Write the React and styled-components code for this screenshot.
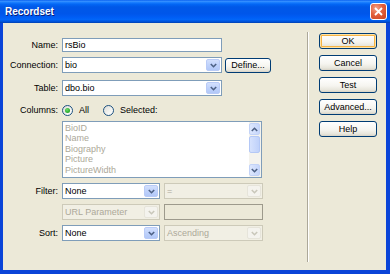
import React from "react";
import styled, { createGlobalStyle } from "styled-components";

const GlobalStyle = createGlobalStyle`
  html, body {
    margin: 0;
    padding: 0;
    background: #ece9d8;
  }
  * {
    box-sizing: border-box;
  }
`;

const Window = styled.div`
  width: 390px;
  height: 274px;
  display: flex;
  flex-direction: column;
  font-family: "Liberation Sans", Arial, sans-serif;
  font-size: 9px;
  color: #000;
  overflow: hidden;
`;

const TitleBar = styled.div`
  height: 23px;
  flex-shrink: 0;
  display: flex;
  align-items: center;
  justify-content: space-between;
  padding: 0 3px 0 5px;
  background: linear-gradient(
    to bottom,
    #0058ee 0%,
    #3a93ff 5%,
    #1c80ff 10%,
    #0367f5 18%,
    #0058e8 30%,
    #0056ea 60%,
    #005df5 75%,
    #0165f8 85%,
    #0052d8 94%,
    #0040b0 100%
  );
`;

const Title = styled.span`
  color: #fff;
  font-weight: bold;
  font-size: 10px;
  text-shadow: 1px 1px 0 #0a1e7a;
`;

const CloseButton = styled.div`
  width: 17px;
  height: 17px;
  border: 1px solid #fff;
  border-radius: 3px;
  background: radial-gradient(circle at 35% 30%, #f3a48a 0%, #e2603c 45%, #c9421f 100%);
  display: flex;
  align-items: center;
  justify-content: center;
`;

const Frame = styled.div`
  flex: 1;
  display: flex;
  background: #ece9d8;
  border-style: solid;
  border-color: #0a44d8;
  border-width: 0 4px 4px 3px;
`;

const FormColumn = styled.div`
  width: 304px;
  padding-top: 15px;
  display: flex;
  flex-direction: column;
`;

const Row = styled.div`
  display: flex;
  align-items: center;
  height: ${(p) => p.$h || 16}px;
  margin-top: ${(p) => p.$mt || 0}px;
`;

const Label = styled.span`
  width: 55px;
  margin-right: 4px;
  text-align: right;
  flex-shrink: 0;
`;

const TextField = styled.div`
  width: ${(p) => p.$w}px;
  height: ${(p) => p.$h || 16}px;
  margin-left: ${(p) => p.$ml || 0}px;
  border: 1px solid ${(p) => (p.$disabled ? "#9d9a8c" : "#7f9db9")};
  background: ${(p) => (p.$disabled ? "#ece9d8" : "#fff")};
  padding-left: 2px;
  display: flex;
  align-items: center;
`;

const SelectBox = styled.div`
  width: ${(p) => p.$w}px;
  height: 16px;
  margin-left: ${(p) => p.$ml || 0}px;
  border: 1px solid ${(p) => (p.$disabled ? "#cdcab9" : "#7f9db9")};
  background: ${(p) => (p.$disabled ? "#f1efe4" : "#fff")};
  color: ${(p) => (p.$disabled ? "#aca899" : "#000")};
  display: flex;
  align-items: center;
  justify-content: space-between;
  padding: 1px 1px 1px 2px;
`;

const DropButton = styled.div`
  width: 14px;
  height: 12px;
  border-radius: 2px;
  border: 1px solid ${(p) => (p.$disabled ? "#e6e4da" : "#b9cbf7")};
  background: ${(p) =>
    p.$disabled
      ? "#f4f3ee"
      : "linear-gradient(to bottom, #d3e0fd 0%, #bfd2fb 50%, #b2c8f8 100%)"};
  display: flex;
  align-items: center;
  justify-content: center;
`;

const XPButton = styled.div`
  width: ${(p) => p.$w || 58}px;
  height: ${(p) => p.$h || 16}px;
  margin-left: ${(p) => p.$ml || 0}px;
  border: 1px solid #003c74;
  border-radius: 3px;
  background: linear-gradient(to bottom, #ffffff 0%, #f6f5f0 55%, #e8e6dc 85%, #d7d2c6 100%);
  box-shadow: ${(p) => (p.$default ? "inset 0 0 0 1px #ffe3a6, inset 0 0 0 2px #f5b445" : "none")};
  display: flex;
  align-items: center;
  justify-content: center;
`;

const RadioOption = styled.div`
  display: flex;
  align-items: center;
  margin-left: ${(p) => p.$ml || 0}px;
`;

const RadioCircle = styled.span`
  width: 11px;
  height: 11px;
  border-radius: 50%;
  border: 1px solid #1c5180;
  background: linear-gradient(135deg, #dcdcd7 0%, #f4f4f1 60%, #ffffff 100%);
  display: flex;
  align-items: center;
  justify-content: center;
  margin-right: 6px;
`;

const RadioDot = styled.span`
  width: 5px;
  height: 5px;
  border-radius: 50%;
  background: radial-gradient(circle at 40% 35%, #6fdc6f 0%, #2fae2f 60%, #1e8f1e 100%);
`;

const ListBox = styled.div`
  width: 200px;
  height: 57px;
  border: 1px solid #7f9db9;
  background: #fff;
  display: flex;
`;

const ListItems = styled.div`
  flex: 1;
  padding: 1px 0 0 2px;
  color: #aca899;
  line-height: 10.4px;
`;

const Scrollbar = styled.div`
  width: 12px;
  display: flex;
  flex-direction: column;
  background: #f4f3ee;
  padding: 1px 1px 1px 0;
`;

const ScrollArrow = styled.div`
  height: 12px;
  border: 1px solid #c3d3f7;
  border-radius: 2px;
  background: linear-gradient(to right, #dde7fd, #c6d6fb);
  display: flex;
  align-items: center;
  justify-content: center;
`;

const ScrollTrack = styled.div`
  flex: 1;
  padding: 1px 0;
`;

const ScrollThumb = styled.div`
  height: 17px;
  border: 1px solid #b4c8f6;
  border-radius: 2px;
  background: linear-gradient(to right, #d6e2fd, #bfd1fa);
`;

const Separator = styled.div`
  width: 2px;
  height: 230px;
  margin-top: 9px;
  border-left: 1px solid #aca899;
  border-right: 1px solid #ffffff;
`;

const ButtonColumn = styled.div`
  padding: 10px 0 0 10px;
  display: flex;
  flex-direction: column;
  gap: 6px;
`;

const Chevron = ({ dir = "down", color = "#4d6185" }) => (
  <svg width="7" height="5" viewBox="0 0 7 5">
    <path
      d={dir === "down" ? "M0.8 1 L3.5 3.7 L6.2 1" : "M0.8 4 L3.5 1.3 L6.2 4"}
      fill="none"
      stroke={color}
      strokeWidth="1.6"
    />
  </svg>
);

const Select = ({ value, width, disabled, ml }) => (
  <SelectBox $w={width} $disabled={disabled} $ml={ml}>
    <span>{value}</span>
    <DropButton $disabled={disabled}>
      <Chevron color={disabled ? "#c9c7ba" : "#4d6185"} />
    </DropButton>
  </SelectBox>
);

const columns = ["BioID", "Name", "Biography", "Picture", "PictureWidth"];

const App = () => {
  return (
    <Window>
      <GlobalStyle />
      <TitleBar>
        <Title>Recordset</Title>
        <CloseButton>
          <svg width="9" height="9" viewBox="0 0 9 9">
            <path d="M1 1 L8 8 M8 1 L1 8" stroke="#fff" strokeWidth="1.8" />
          </svg>
        </CloseButton>
      </TitleBar>
      <Frame>
        <FormColumn>
          <Row $h={14}>
            <Label>Name:</Label>
            <TextField $w={160} $h={14}>rsBio</TextField>
          </Row>
          <Row $mt={5}>
            <Label>Connection:</Label>
            <Select value="bio" width={160} />
            <XPButton $w={46} $h={15} $ml={3}>Define...</XPButton>
          </Row>
          <Row $mt={7}>
            <Label>Table:</Label>
            <Select value="dbo.bio" width={160} />
          </Row>
          <Row $mt={7} $h={14}>
            <Label>Columns:</Label>
            <RadioOption>
              <RadioCircle>
                <RadioDot />
              </RadioCircle>
              All
            </RadioOption>
            <RadioOption $ml={14}>
              <RadioCircle />
              Selected:
            </RadioOption>
          </Row>
          <Row $mt={4} $h={57}>
            <Label />
            <ListBox>
              <ListItems>
                {columns.map((c) => (
                  <div key={c}>{c}</div>
                ))}
              </ListItems>
              <Scrollbar>
                <ScrollArrow>
                  <Chevron dir="up" />
                </ScrollArrow>
                <ScrollTrack>
                  <ScrollThumb />
                </ScrollTrack>
                <ScrollArrow>
                  <Chevron />
                </ScrollArrow>
              </Scrollbar>
            </ListBox>
          </Row>
          <Row $mt={5}>
            <Label>Filter:</Label>
            <Select value="None" width={98} />
            <Select value="=" width={99} disabled ml={4} />
          </Row>
          <Row $mt={5}>
            <Label />
            <Select value="URL Parameter" width={98} disabled />
            <TextField $w={99} $ml={4} $disabled />
          </Row>
          <Row $mt={5}>
            <Label>Sort:</Label>
            <Select value="None" width={98} />
            <Select value="Ascending" width={99} disabled ml={4} />
          </Row>
        </FormColumn>
        <Separator />
        <ButtonColumn>
          <XPButton $default>OK</XPButton>
          <XPButton>Cancel</XPButton>
          <XPButton>Test</XPButton>
          <XPButton>Advanced...</XPButton>
          <XPButton>Help</XPButton>
        </ButtonColumn>
      </Frame>
    </Window>
  );
};

export default App;
